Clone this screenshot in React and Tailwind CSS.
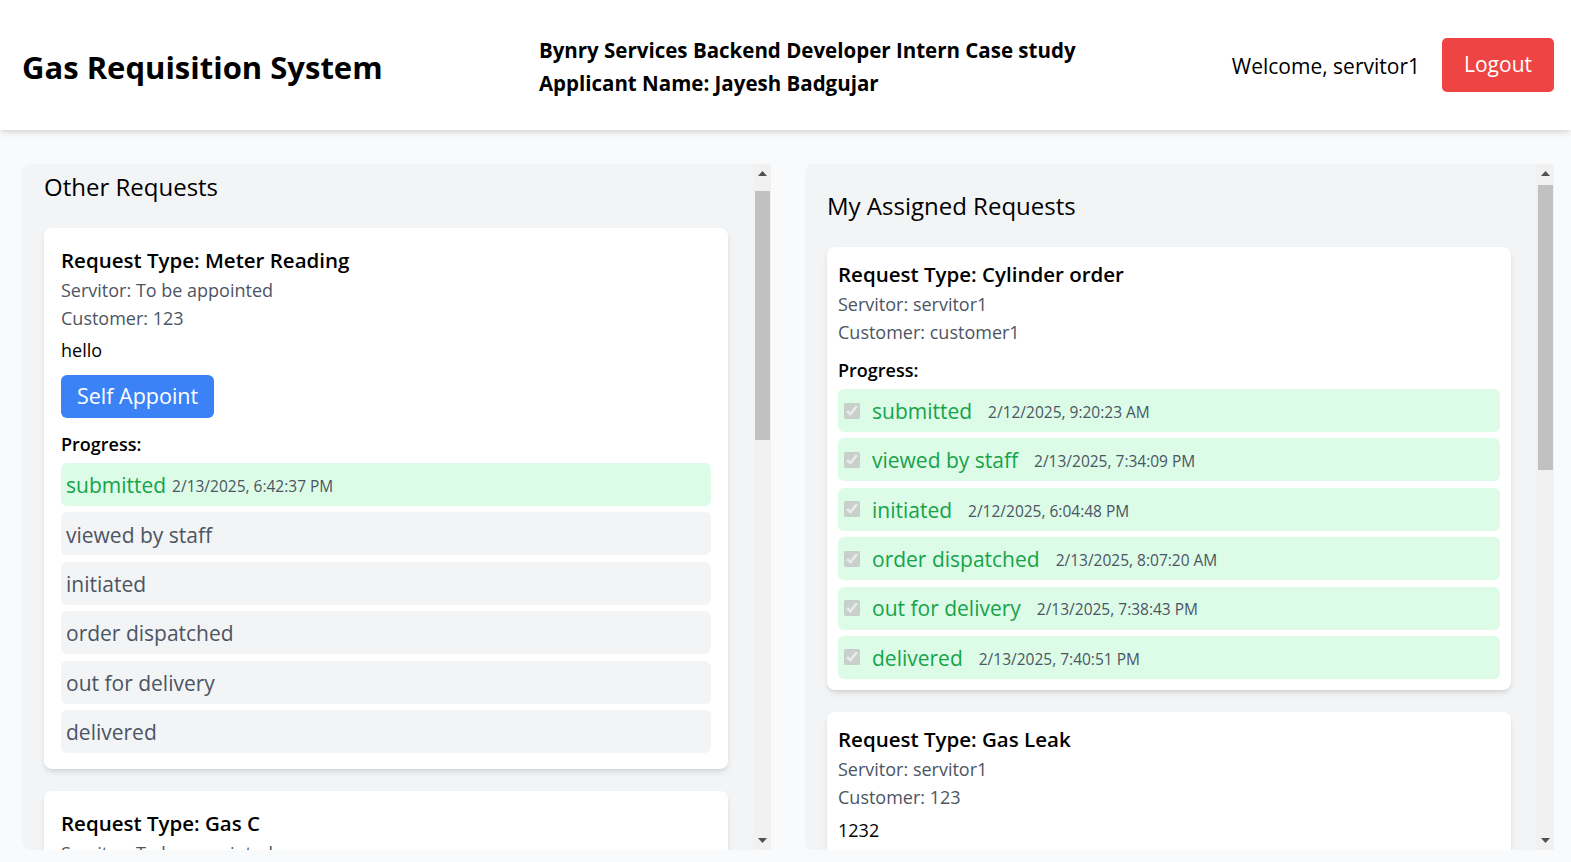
import React, { useLayoutEffect, useRef } from "react";

const leftCards = [
  {
    type: "Meter Reading",
    servitor: "To be appointed",
    customer: "123",
    desc: "hello",
    appoint: true,
    progress: [
      { label: "submitted", time: "2/13/2025, 6:42:37 PM", done: true },
      { label: "viewed by staff" },
      { label: "initiated" },
      { label: "order dispatched" },
      { label: "out for delivery" },
      { label: "delivered" },
    ],
  },
  {
    type: "Gas C",
    servitor: "To be appointed",
    customer: "customer1",
    desc: "need new connection",
    appoint: true,
    progress: [
      { label: "submitted", time: "2/12/2025, 4:15:02 PM", done: true },
      { label: "viewed by staff" },
      { label: "initiated" },
      { label: "order dispatched" },
      { label: "out for delivery" },
      { label: "delivered" },
    ],
  },
  {
    type: "Cylinder order",
    servitor: "To be appointed",
    customer: "123",
    desc: "urgent",
    appoint: true,
    progress: [
      { label: "submitted", time: "2/13/2025, 7:02:11 PM", done: true },
      { label: "viewed by staff" },
      { label: "initiated" },
    ],
  },
];

const rightCards = [
  {
    type: "Cylinder order",
    servitor: "servitor1",
    customer: "customer1",
    progress: [
      { label: "submitted", time: "2/12/2025, 9:20:23 AM" },
      { label: "viewed by staff", time: "2/13/2025, 7:34:09 PM" },
      { label: "initiated", time: "2/12/2025, 6:04:48 PM" },
      { label: "order dispatched", time: "2/13/2025, 8:07:20 AM" },
      { label: "out for delivery", time: "2/13/2025, 7:38:43 PM" },
      { label: "delivered", time: "2/13/2025, 7:40:51 PM" },
    ],
  },
  {
    type: "Gas Leak",
    servitor: "servitor1",
    customer: "123",
    desc: "1232",
    progress: [
      { label: "submitted", time: "2/13/2025, 6:10:05 PM" },
      { label: "viewed by staff", time: "2/13/2025, 7:35:40 PM" },
      { label: "initiated", time: "2/13/2025, 7:36:12 PM" },
      { label: "order dispatched", time: "2/13/2025, 7:37:01 PM" },
      { label: "out for delivery", time: "2/13/2025, 7:39:18 PM" },
      { label: "delivered", time: "2/13/2025, 7:41:30 PM" },
    ],
  },
  {
    type: "Meter Reading",
    servitor: "servitor1",
    customer: "customer1",
    progress: [
      { label: "submitted", time: "2/11/2025, 10:02:44 AM" },
      { label: "viewed by staff", time: "2/11/2025, 11:15:09 AM" },
      { label: "initiated", time: "2/12/2025, 9:01:36 AM" },
    ],
  },
];

function OtherCard({ c }) {
  return (
    <div className="bg-white rounded-lg shadow-md px-[17px] pt-[16px] pb-[16px]">
      <h3 className="text-[20.5px] font-semibold leading-[32px] text-black">
        Request Type: {c.type}
      </h3>
      <p className="text-[18px] leading-[28px] text-[#4b5563]">Servitor: {c.servitor}</p>
      <p className="text-[18px] leading-[28px] text-[#4b5563]">Customer: {c.customer}</p>
      <p className="mt-[4px] text-[18px] leading-[28px] text-black">{c.desc}</p>
      {c.appoint && (
        <button className="mt-[11px] h-[43px] px-4 rounded-md bg-[#3b82f6] text-white text-[21.5px]">
          Self Appoint
        </button>
      )}
      <p className="mt-[14px] text-[18px] font-semibold leading-[24px] text-black">Progress:</p>
      <div className="mt-[7px] flex flex-col gap-[6.4px]">
        {c.progress.map((p) => (
          <div
            key={p.label}
            className={
              p.done
                ? "h-[43px] flex items-center px-[5px] rounded-md bg-[#dcfce7]"
                : "h-[43px] flex items-center px-[5px] rounded-md bg-[#f3f4f6]"
            }
          >
            <span
              className={
                p.done
                  ? "pt-[3px] text-[21px] text-[#16a34a]"
                  : "pt-[3px] text-[21px] text-[#4b5563]"
              }
            >
              {p.label}
            </span>
            {p.time && (
              <span className="ml-[6px] text-[15.5px] text-[#4b5563] pt-[5px]">{p.time}</span>
            )}
          </div>
        ))}
      </div>
    </div>
  );
}

function MyCard({ c }) {
  return (
    <div className="bg-white rounded-lg shadow-md p-[11px]">
      <h3 className="text-[20.5px] font-semibold leading-[32px] text-black">
        Request Type: {c.type}
      </h3>
      <p className="text-[18px] leading-[28px] text-[#4b5563]">Servitor: {c.servitor}</p>
      <p className="text-[18px] leading-[28px] text-[#4b5563]">Customer: {c.customer}</p>
      {c.desc && (
        <p className="mt-[5px] text-[18px] leading-[28px] text-black">{c.desc}</p>
      )}
      <p className="mt-[12px] text-[18px] font-semibold leading-[24px] text-black">Progress:</p>
      <div className="mt-[7px] flex flex-col gap-[6.4px]">
        {c.progress.map((p) => (
          <div
            key={p.label}
            className="h-[43px] flex items-center px-[6px] rounded-md bg-[#dcfce7]"
          >
            <input type="checkbox" checked disabled readOnly className="w-4 h-4 mr-3 shrink-0" />
            <span className="pt-[2px] text-[21px] text-[#16a34a]">{p.label}</span>
            <span className="ml-4 text-[15.5px] text-[#4b5563] pt-[4px]">{p.time}</span>
          </div>
        ))}
      </div>
    </div>
  );
}

function Scrollbar({ thumbClass }) {
  return (
    <div className="w-[18px] shrink-0 bg-[#f1f1f1] flex flex-col">
      <div className="h-[19px] flex items-center justify-center">
        <svg width="9" height="5" viewBox="0 0 9 5">
          <path d="M0 5 L4.5 0 L9 5 Z" fill="#505050" />
        </svg>
      </div>
      <div className="flex-1 px-[1.5px]">
        <div className={thumbClass} />
      </div>
      <div className="h-[19px] flex items-center justify-center">
        <svg width="9" height="5" viewBox="0 0 9 5">
          <path d="M0 0 L4.5 5 L9 0 Z" fill="#505050" />
        </svg>
      </div>
    </div>
  );
}

export default function App() {
  const leftRef = useRef(null);
  useLayoutEffect(() => {
    if (leftRef.current) leftRef.current.scrollTop = 19;
  }, []);

  return (
    <div className="min-h-screen bg-[#f9fafb] font-['Open_Sans',sans-serif] text-black">
      <header className="relative z-10 bg-white shadow-md h-[130px] pl-[22px] pr-[17px] flex items-center justify-between">
        <h1 className="mt-[3px] text-[31px] font-bold leading-[40px]">Gas Requisition System</h1>
        <div className="mt-[3px] text-[20.5px] font-bold leading-[33px]">
          <p>Bynry Services Backend Developer Intern Case study</p>
          <p>Applicant Name: Jayesh Badgujar</p>
        </div>
        <div className="flex items-center gap-[22px]">
          <span className="mt-[4px] text-[21px]">Welcome, servitor1</span>
          <button className="h-[54px] w-[112px] rounded-[5px] bg-[#ef4444] text-white text-[21px]">
            Logout
          </button>
        </div>
      </header>

      <main className="grid grid-cols-2 gap-[34px] pl-[22px] pr-[17px] pt-[34px]">
        <section className="h-[686px] flex">
          <div
            ref={leftRef}
            className="flex-1 overflow-hidden rounded-l-lg bg-[#f3f4f6] pl-[22px] pr-[25px] pt-[24px] pb-[22px]"
          >
            <h2 className="text-[24px] leading-[36px] mb-[23px]">Other Requests</h2>
            <div className="flex flex-col gap-[22px]">
              {leftCards.map((c, i) => (
                <OtherCard key={i} c={c} />
              ))}
            </div>
          </div>
          <Scrollbar thumbClass="mt-[8px] h-[249px] bg-[#c1c1c1]" />
        </section>

        <section className="h-[686px] flex">
          <div className="flex-1 overflow-hidden rounded-l-lg bg-[#f3f4f6] pl-[22px] pr-[25px] pt-[24px] pb-[22px]">
            <h2 className="text-[24px] leading-[36px] mb-[23px]">My Assigned Requests</h2>
            <div className="flex flex-col gap-[22px]">
              {rightCards.map((c, i) => (
                <MyCard key={i} c={c} />
              ))}
            </div>
          </div>
          <Scrollbar thumbClass="mt-[2px] h-[285px] bg-[#c1c1c1]" />
        </section>
      </main>
    </div>
  );
}
